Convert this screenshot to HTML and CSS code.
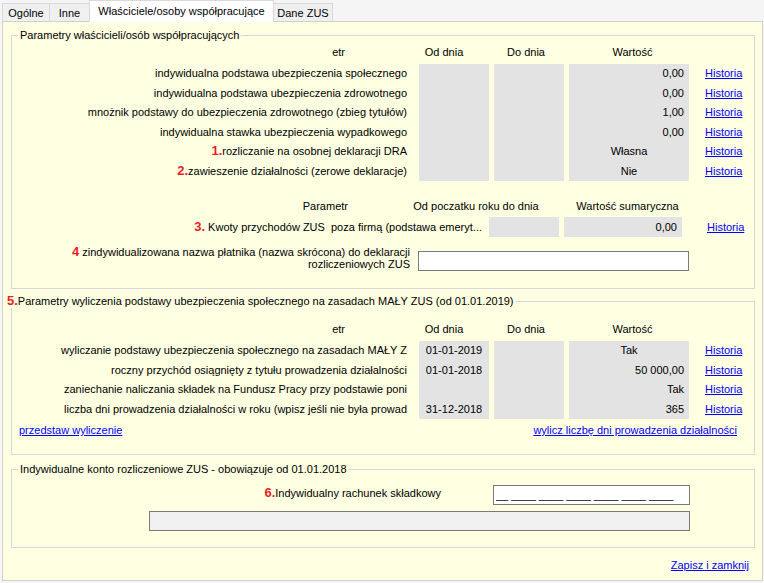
FILE: index.html
```html
<!DOCTYPE html>
<html lang="pl">
<head>
  <meta charset="UTF-8">
  <title>Właściciele/osoby współpracujące</title>
  <link rel="stylesheet" href="styles.css">
</head>
<body>
  <div id="tabs">
    <div class="tab t-ogolne">Ogólne</div>
    <div class="tab t-inne">Inne</div>
    <div class="tab t-wlasc active">Właściciele/osoby współpracujące</div>
    <div class="tab t-zus">Dane ZUS</div>
  </div>

  <div id="panel">
    <!-- parametry wlascicieli -->
    <fieldset class="group g-owners">
      <legend>Parametry właścicieli/osób współpracujących</legend>
      <div class="head">
        <span class="hc hc-par">etr</span>
        <span class="hc hc-od">Od dnia</span>
        <span class="hc hc-do">Do dnia</span>
        <span class="hc hc-val">Wartość</span>
      </div>
      <div class="rows">
        <div class="lbl">indywidualna podstawa ubezpieczenia społecznego</div>
        <div class="box"></div><div class="box"></div><div class="box num">0,00</div><a class="hist" href="#">Historia</a>

        <div class="lbl">indywidualna podstawa ubezpieczenia zdrowotnego</div>
        <div class="box"></div><div class="box"></div><div class="box num">0,00</div><a class="hist" href="#">Historia</a>

        <div class="lbl">mnożnik podstawy do ubezpieczenia zdrowotnego (zbieg tytułów)</div>
        <div class="box"></div><div class="box"></div><div class="box num">1,00</div><a class="hist" href="#">Historia</a>

        <div class="lbl">indywidualna stawka ubezpieczenia wypadkowego</div>
        <div class="box"></div><div class="box"></div><div class="box num">0,00</div><a class="hist" href="#">Historia</a>

        <div class="lbl"><span class="no">1.</span>rozliczanie na osobnej deklaracji DRA</div>
        <div class="box"></div><div class="box"></div><div class="box ctr">Własna</div><a class="hist" href="#">Historia</a>

        <div class="lbl"><span class="no">2.</span>zawieszenie działalności (zerowe deklaracje)</div>
        <div class="box"></div><div class="box"></div><div class="box ctr">Nie</div><a class="hist" href="#">Historia</a>
      </div>

      <div class="head head-sum">
        <span class="hc hs-par">Parametr</span>
        <span class="hc hs-od">Od poczatku roku do dnia</span>
        <span class="hc hs-val">Wartość sumaryczna</span>
      </div>
      <div class="rows rows-sum">
        <div class="lbl"><span class="no">3.</span> Kwoty przychodów ZUS&nbsp; poza firmą (podstawa emeryt...</div>
        <div class="box"></div><div class="box num">0,00</div><a class="hist" href="#">Historia</a>
      </div>

      <div class="name-row">
        <div class="name-lbl"><span class="no">4</span> zindywidualizowana nazwa płatnika (nazwa skrócona) do deklaracji<br>rozliczeniowych ZUS</div>
        <input class="edit name-edit" type="text" value="">
      </div>
    </fieldset>

    <!-- maly ZUS -->
    <fieldset class="group g-maly">
      <legend><span class="no">5.</span>Parametry wyliczenia podstawy ubezpieczenia społecznego na zasadach MAŁY ZUS (od 01.01.2019)</legend>
      <div class="head head-maly">
        <span class="hc hc-par">etr</span>
        <span class="hc hc-od">Od dnia</span>
        <span class="hc hc-do">Do dnia</span>
        <span class="hc hc-val">Wartość</span>
      </div>
      <div class="rows">
        <div class="lbl">wyliczanie podstawy ubezpieczenia społecznego na zasadach MAŁY Z</div>
        <div class="box ctr">01-01-2019</div><div class="box"></div><div class="box ctr">Tak</div><a class="hist" href="#">Historia</a>

        <div class="lbl">roczny przychód osiągnięty z tytułu prowadzenia działalności</div>
        <div class="box ctr">01-01-2018</div><div class="box"></div><div class="box num">50 000,00</div><a class="hist" href="#">Historia</a>

        <div class="lbl">zaniechanie naliczania składek na Fundusz Pracy przy podstawie poni</div>
        <div class="box"></div><div class="box"></div><div class="box num">Tak</div><a class="hist" href="#">Historia</a>

        <div class="lbl">liczba dni prowadzenia działalności w roku (wpisz jeśli nie była prowad</div>
        <div class="box ctr">31-12-2018</div><div class="box"></div><div class="box num">365</div><a class="hist" href="#">Historia</a>
      </div>
      <div class="links">
        <a href="#">przedstaw wyliczenie</a>
        <a href="#">wylicz liczbę dni prowadzenia działalności</a>
      </div>
    </fieldset>

    <!-- konto ZUS -->
    <fieldset class="group g-konto">
      <legend>Indywidualne konto rozliczeniowe ZUS - obowiązuje od 01.01.2018</legend>
      <div class="acc-row">
        <div class="acc-lbl"><span class="no">6.</span>Indywidualny rachunek składkowy</div>
        <input class="edit acc-edit" type="text" value="__ ____ ____ ____ ____ ____ ____">
      </div>
      <div class="acc-bar"></div>
    </fieldset>

    <div class="footer"><a href="#">Zapisz i zamknij</a></div>
  </div>
</body>
</html>
```

FILE: styles.css
```css
html, body {
  margin: 0;
  padding: 0;
}
body {
  background: #f5f5f5;
  font-family: "Liberation Sans", Arial, sans-serif;
  font-size: 11px;
  color: #000;
  height: 583px;
  overflow: hidden;
}
a {
  color: #0000ff;
  text-decoration: underline;
}

/* Tabs */
#tabs {
  display: flex;
  align-items: flex-end;
  height: 21px;
  padding-left: 2px;
}
.tab {
  box-sizing: border-box;
  height: 18px;
  line-height: 18px;
  border: 1px solid #d9d9d9;
  border-bottom: none;
  background: #f0f0f0;
  text-align: center;
  margin-right: -1px;
}
.t-ogolne { width: 48px; }
.t-inne { width: 41px; }
.t-wlasc { width: 185px; }
.t-zus { width: 60px; }
.tab.active {
  position: relative;
  z-index: 1;
  height: 22px;
  line-height: 20px;
  margin-bottom: -1px;
  background: #fff;
}

/* Main panel */
#panel {
  box-sizing: border-box;
  width: 761px;
  height: 560px;
  margin-left: 2px;
  border: 1px solid #d0d0d0;
  background: #ffffe1;
  overflow: hidden;
}
.group {
  margin: 6px 7px 0 8px;
  padding: 0;
  border: 1px solid #d6d6d6;
  min-width: 0;
}
.group legend {
  padding: 0 2px;
  margin-left: 6px;
  line-height: 14px;
}
.g-owners { padding-bottom: 17px; }
.g-maly { margin-top: 5px; padding-bottom: 17px; }
.g-maly legend { margin-left: -7px; }
.g-konto { margin-top: 7px; padding-bottom: 16px; }

.no {
  color: #ec1c24;
  font-weight: bold;
  font-size: 13px;
  line-height: 10px;
}

/* Column headers */
.head {
  display: flex;
  height: 22px;
  padding-top: 3px;
  box-sizing: border-box;
  line-height: 14px;
  white-space: nowrap;
}
.hc { display: block; text-align: center; }
.hc-par { width: 392px; text-align: right; padding-right: 59px; box-sizing: border-box; }
.hc-od { width: 80px; }
.hc-do { width: 84px; }
.hc-val { width: 129px; }
.head-maly {
  height: 33px;
  padding-top: 14px;
}
.head-sum {
  height: 21px;
  padding-top: 0;
  margin-top: 15px;
  line-height: 20px;
}
.hs-par { width: 388px; text-align: right; padding-right: 52px; box-sizing: border-box; }
.hs-od { width: 152px; }
.hs-val { width: 151px; }

/* Rows */
.rows {
  display: grid;
  grid-template-columns: 402px 70px 70px 120px auto;
  grid-auto-rows: 19.5px;
  column-gap: 5px;
  line-height: 19.5px;
  white-space: nowrap;
}
.lbl {
  text-align: right;
  padding-right: 7px;
  overflow: hidden;
}
.box {
  background: #e3e3e3;
  overflow: hidden;
}
.num { text-align: right; padding-right: 5px; }
.ctr { text-align: center; }
.hist { padding-left: 11px; }

.rows-sum {
  grid-template-columns: 472px 70px 118px auto;
  grid-auto-rows: 20px;
  line-height: 20px;
}
.rows-sum .lbl { padding-right: 2px; }
.rows-sum .hist { padding-left: 20px; }

/* Edit fields */
.edit {
  box-sizing: border-box;
  height: 20px;
  margin: 0;
  padding: 0 2px;
  border: 1px solid #7a7a7a;
  background: #fff;
  font-family: inherit;
  font-size: 11px;
  color: #000;
  outline: none;
}
.name-row {
  display: flex;
  align-items: flex-start;
  margin-top: 9px;
}
.name-lbl {
  width: 398px;
  text-align: right;
  line-height: 12px;
  white-space: nowrap;
}
.name-edit {
  width: 271px;
  margin: 5px 0 0 8px;
}

.links {
  display: flex;
  justify-content: space-between;
  padding: 0 17px 0 7px;
  margin-top: 4px;
  line-height: 14px;
}

.acc-row {
  display: flex;
  align-items: center;
  margin-top: 9px;
}
.acc-lbl {
  width: 429px;
  text-align: right;
  padding-bottom: 4px;
  white-space: nowrap;
}
.acc-edit {
  width: 197px;
  margin-left: 52px;
}
.acc-bar {
  box-sizing: border-box;
  width: 541px;
  height: 20px;
  margin: 6px 0 0 137px;
  border: 1px solid #7a7a7a;
  background: #f0f0f0;
}

.footer {
  margin-top: 10px;
  padding-right: 13px;
  text-align: right;
  line-height: 14px;
}
```
